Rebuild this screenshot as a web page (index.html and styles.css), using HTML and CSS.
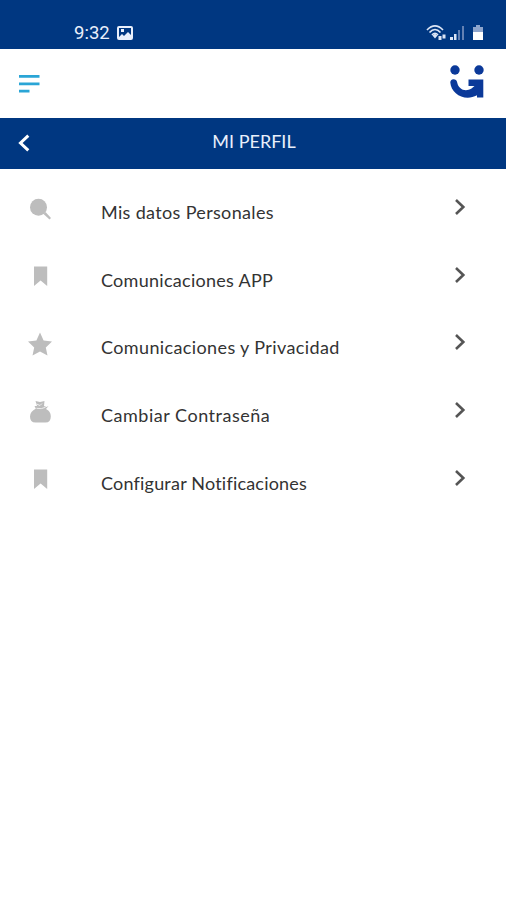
FILE: index.html
```html
<!DOCTYPE html>
<html lang="es">
<head>
<meta charset="utf-8">
<title>Mi perfil</title>
<link rel="stylesheet" href="styles.css">
</head>
<body>
<div class="status">
  <span class="time">9:32</span>
  <svg class="photo" width="16" height="16" viewBox="0 0 16 16"><path fill="#e9effb" fill-rule="evenodd" d="M2 1h12q2 0 2 2v10q0 2-2 2H2q-2 0-2-2V3q0-2 2-2zM2 3v9l3-3 2 2 4-4 3 3V3zM4 4h3v3H4z"/></svg>
  <svg class="signals" width="56" height="20" viewBox="0 0 56 20">
    <g fill="none" stroke="#dce5f5" stroke-width="1.7"><path d="M0 7q8-8 16 0M2.500 9.500q5.500-6 11 0M5 12q3-3.500 6 0"/></g>
    <path fill="#dce5f5" d="M5.500 12.500 8 10.500l2.500 2L8 15.500zM11.500 13h3v4h-3zM15.500 11.500h3v4h-3zM23 14h3v3h-3zM27 11h2.500v6H27z"/>
    <path fill="#6381b3" d="M31 7h2v10h-2zM35 3h2v14h-2z"/>
    <path fill="#8ea5cc" d="M49 2h4v2h3v5H46V4h3z"/><path fill="#fff" d="M46 9h10v8H46z"/>
  </svg>
</div>
<header class="top">
  <svg width="22" height="20" viewBox="0 0 22 20"><path fill="none" stroke="#2aa5d6" stroke-width="2.700" d="M0 2.400h20.500M0 9.800h20.500M0 17.200h10.500"/></svg>
  <svg width="36" height="36" viewBox="0 0 36 36"><g fill="#0b3999"><circle cx="6" cy="6" r="4.700"/><circle cx="30" cy="6" r="4.700"/><path d="M19.500 15.500h14.800v18H28v-2.200C16 38 2 30 1.300 18.500q0-3 3.200-3.300 3 0 3.700 3.300C9.500 25 16 28.500 22.500 24.500l3-2.500h-6z"/></g></svg>
</header>
<div class="titlebar">
  <svg class="back" width="12" height="18" viewBox="0 0 12 18"><path fill="none" stroke="#fff" stroke-width="3" d="M10.300 1.700 2.500 9l7.800 7.300"/></svg>
  <h1>MI PERFIL</h1>
</div>
<main>
  <div class="row">
    <svg class="icon" viewBox="0 0 26 26"><circle cx="11.500" cy="11.300" r="8.500"/><path d="m16.500 18 2-2 5.500 6-1.500 1.500z"/></svg>
    <span class="label personal">Mis datos Personales</span>
    <svg class="arrow" viewBox="0 0 12 18"><path d="m2 2 7.300 7L2 16"/></svg>
  </div>
  <div class="row">
    <svg class="icon" viewBox="0 0 26 26"><path d="M7 2.500h13.200V22L13.600 16.500 7 22z"/></svg>
    <span class="label app">Comunicaciones APP</span>
    <svg class="arrow" viewBox="0 0 12 18"><path d="m2 2 7.300 7L2 16"/></svg>
  </div>
  <div class="row">
    <svg class="icon" viewBox="0 0 26 26"><path d="m13 1.500 3.600 8 8.400.9-6.200 6 1.700 8.100-7.500-4-7.500 4 1.700-8.100-6.200-6 8.400-.9z"/></svg>
    <span class="label privacy">Comunicaciones y Privacidad</span>
    <svg class="arrow" viewBox="0 0 12 18"><path d="m2 2 7.300 7L2 16"/></svg>
  </div>
  <div class="row">
    <svg class="icon" viewBox="0 0 26 26"><path d="M9 9.500h9c4 2 5.800 4 5.800 8q0 6-5.300 6H8.500q-5.500 0-5.500-6 0-5 6-8zM8.500 2l4.500 1 4.500-1-.5 5 2.500 1 2-1-2.500 3H9L7.500 7H10z"/><path class="fold" d="m9.500 5 3.500 1.500L15 4.500M9.500 9.300q5 1.200 9-1"/></svg>
    <span class="label password">Cambiar Contraseña</span>
    <svg class="arrow" viewBox="0 0 12 18"><path d="m2 2 7.300 7L2 16"/></svg>
  </div>
  <div class="row">
    <svg class="icon" viewBox="0 0 26 26"><path d="M7 2.500h13.200V22L13.600 16.500 7 22z"/></svg>
    <span class="label alerts">Configurar Notificaciones</span>
    <svg class="arrow" viewBox="0 0 12 18"><path d="m2 2 7.300 7L2 16"/></svg>
  </div>
</main>
</body>
</html>
```
FILE: styles.css
```css
* { box-sizing: border-box; }
body { margin: 0; height: 900px; background: #fff; font-family: Lato, sans-serif; }
svg { display: block; flex: none; }
.status { height: 49px; padding: 16px 26px 0 74px; background: #003781; display: flex; align-items: center; }
.time { width: 37px; font: 400 18.500px/34px Roboto, sans-serif; color: #e9effb; }
.photo { margin-left: 6px; }
.signals { margin-left: auto; overflow: visible; margin-right: -3px; }
.top { height: 69px; padding: 0 21px 0 19px; display: flex; align-items: center; justify-content: space-between; }
.top svg:last-child { margin-top: -4px; }
.titlebar { height: 51px; background: #003781; display: grid; grid-template-columns: 60px 1fr 60px; align-items: center; }
.back { margin: -2px 0 0 18px; }
h1 { margin: 0 0 5px 2px; text-align: center; color: #e9effb; font-size: 18px; line-height: 24px; font-weight: 400; }
main { padding-top: 4px; }
.row { height: 67.700px; padding: 0 40px 0 27px; display: flex; align-items: center; }
.icon { width: 26px; height: 26px; fill: #bdbdbd; margin-top: 4px; }
.fold { fill: none; stroke: #eee; stroke-width: 1; }
.label { flex: 1; margin: 10px 0 0 48px; font-size: 18px; line-height: 24px; color: #333; white-space: nowrap; }
.personal { letter-spacing: .34px; }
.app { letter-spacing: .28px; }
.privacy { letter-spacing: .38px; }
.password { letter-spacing: .52px; }
.alerts { letter-spacing: .2px; }
.arrow { width: 12px; height: 18px; fill: none; stroke: #555; stroke-width: 2.600; }
```
